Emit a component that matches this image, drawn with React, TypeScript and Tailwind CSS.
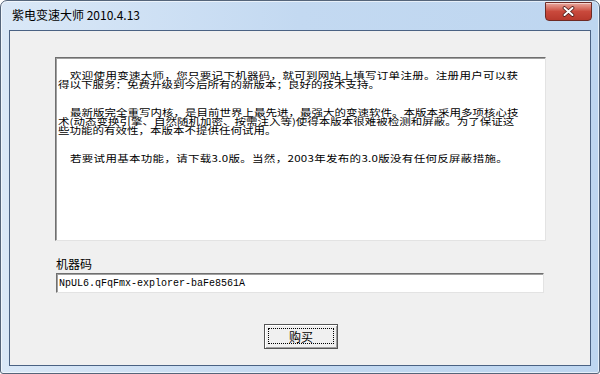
import React from 'react';

type Line = { text: string; indent?: boolean; wide?: boolean };

const PARAS: Line[][] = [
  [
    { text: '欢迎使用变速大师，您只要记下机器码，就可到网站上填写订单注册。注册用户可以获', indent: true, wide: true },
    { text: '得以下服务：免费升级到今后所有的新版本；良好的技术支持。' },
  ],
  [
    { text: '最新版完全重写内核，是目前世界上最先进，最强大的变速软件。本版本采用多项核心技', indent: true },
    { text: '术(动态变换引擎、自然随机加密、按需注入等)使得本版本很难被检测和屏蔽。为了保证这' },
    { text: '些功能的有效性，本版本不提供任何试用。' },
  ],
  [{ text: '若要试用基本功能，请下载3.0版。当然，2003年发布的3.0版没有任何反屏蔽措施。', indent: true, wide: true }],
];

const CloseGlyph = () => (
  <svg width="13" height="11" viewBox="0 0 13 11">
    <path d="M2.5 2 L10.5 9 M10.5 2 L2.5 9" stroke="#4a1c1a" strokeWidth="3.6" strokeLinecap="round" />
    <path d="M2.5 2 L10.5 9 M10.5 2 L2.5 9" stroke="#ffffff" strokeWidth="2" strokeLinecap="round" />
  </svg>
);

export default function App() {
  return (
    <div className="h-[374px] w-[600px] bg-white font-['Noto_Sans_CJK_SC',sans-serif] text-black">
      <div className="flex h-full flex-col rounded-t-[7px] rounded-b-[3px] border border-[#55657a] bg-gradient-to-r from-[#dae8f7] via-[#c3d9f1] to-[#bed6f0] px-[8px] pb-[7px] shadow-[inset_0_0_0_1px_rgba(255,255,255,0.6)]">
        {/* title bar */}
        <div className="flex h-[29px] items-start justify-between">
          <div className="pl-[3px] pt-[6px] text-[12px] leading-[16px]">紫电变速大师 2010.4.13</div>
          <div className="-mr-[1px] mt-[1px] flex h-[19px] w-[47px] items-center justify-center rounded-b-[4px] border border-[#6e2a24] bg-gradient-to-b from-[#e8a89f] via-[#c9493c] to-[#b8392d] shadow-[inset_0_1px_0_rgba(255,255,255,0.5)]">
            <CloseGlyph />
          </div>
        </div>

        {/* client area */}
        <div className="flex flex-1 flex-col border border-[#4a6283] bg-[#f0f0f0]">
          <div className="ml-[45px] mt-[26px] h-[184px] w-[491px] overflow-hidden border border-t-[#6f6f6f] border-l-[#6f6f6f] border-r-[#e3e3e3] border-b-[#e3e3e3] bg-white shadow-[inset_1px_1px_0_#a0a0a0]">
            <div className="origin-top-left scale-y-80 pl-[2px] pt-[16px] text-[11.5px] leading-[11.25px]">
              {PARAS.map((p, i) => (
                <div key={i} className={i > 0 ? 'mt-[23.75px]' : ''}>
                  {p.map((line, j) => (
                    <div
                      key={j}
                      className={`whitespace-pre ${line.indent ? 'pl-[12px]' : ''} ${line.wide ? 'tracking-[0.3px]' : ''}`}
                    >
                      {line.text}
                    </div>
                  ))}
                </div>
              ))}
            </div>
          </div>

          <div className="ml-[46px] mt-[16px] text-[12px] leading-[14px]">机器码</div>
          <div className="ml-[46px] mt-[2px] flex h-[20px] w-[488px] items-center border border-t-[#6f6f6f] border-l-[#6f6f6f] border-r-[#e3e3e3] border-b-[#e3e3e3] bg-white pl-[2px] font-['Liberation_Mono',monospace] text-[10px] shadow-[inset_1px_1px_0_#a0a0a0]">
            NpUL6.qFqFmx-explorer-baFe8561A
          </div>

          <div className="relative mx-auto mt-[31px] flex h-[25px] w-[74px] translate-x-[1px] items-center justify-center border border-[#555555] bg-[#f0f0f0] text-[12px] leading-[14px] shadow-[inset_1px_1px_0_#ffffff,inset_-1px_-1px_0_#a0a0a0]">
            <div className="absolute inset-x-[3px] top-[3px] bottom-[4px] border border-dotted border-black" />
            购买
          </div>
        </div>
      </div>
    </div>
  );
}
